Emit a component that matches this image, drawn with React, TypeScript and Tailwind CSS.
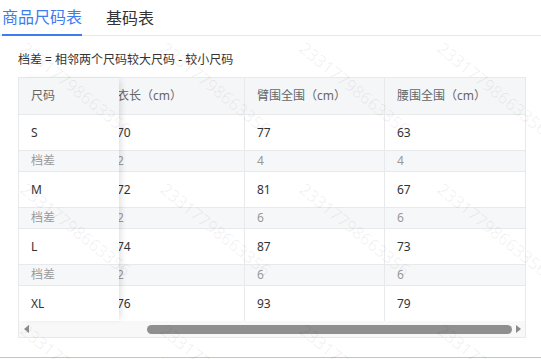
type Row = { label: string; values: string[]; diff?: boolean; h: string };

const rows: Row[] = [
  { label: 'S', values: ['70', '77', '63'], h: 'h-[36px]' },
  { label: '档差', values: ['2', '4', '4'], diff: true, h: 'h-[21px]' },
  { label: 'M', values: ['72', '81', '67'], h: 'h-[36px]' },
  { label: '档差', values: ['2', '6', '6'], diff: true, h: 'h-[21px]' },
  { label: 'L', values: ['74', '87', '73'], h: 'h-[36px]' },
  { label: '档差', values: ['2', '6', '6'], diff: true, h: 'h-[21px]' },
  { label: 'XL', values: ['76', '93', '79'], h: 'h-[35px]' },
];

const headers = ['衣长（cm）', '臂围全围（cm）', '腰围全围（cm）'];
const colCls = ['w-[141px] pl-[13px] border-r', 'w-[140px] pl-[12px] border-r', 'w-[140px] pl-[12px]'];

const marks: [number, number][] = [];
[-97, 45, 186, 327].forEach((y) => {
  [23, 163, 302, 440].forEach((x) => marks.push([x, y]));
});

export default function App() {
  return (
    <div
      className="relative h-[359px] w-[541px] overflow-hidden bg-white text-[#333]"
      style={{ fontFamily: '"Noto Sans", "Noto Sans CJK SC", sans-serif' }}
    >
      {/* tabs */}
      <div className="flex h-[36px] items-stretch gap-[24px] border-b border-[#e8e8e8] pl-[2px]">
        <div className="-mb-px flex items-center border-b-2 border-[#3d7cf0] text-[16px] text-[#3d7cf0]">商品尺码表</div>
        <div className="flex items-center text-[16px] text-[#333]">基码表</div>
      </div>

      <div className="mt-[15px] pl-[18px] text-[12px] leading-[18px] text-[#333]">档差 = 相邻两个尺码较大尺码 - 较小尺码</div>

      {/* table */}
      <div className="mt-[8px] ml-[18px] w-[508px] border border-[#e8e9eb]">
        <div className="flex">
          <div className="relative z-10 w-[100px] shrink-0 bg-white shadow-[4px_0_6px_-2px_rgba(0,0,0,0.12)]">
            <div className="flex h-[37px] items-center border-b border-[#e8e9eb] bg-[#f5f6f8] pl-[12px] text-[12px] text-[#666]">尺码</div>
            {rows.map((r, i) => (
              <div
                key={i}
                className={`flex items-center pl-[12px] text-[12px] ${r.h} ${i < rows.length - 1 ? 'border-b border-[#e8e9eb]' : ''} ${r.diff ? 'bg-[#f6f7f9] text-[#999]' : 'bg-white text-[#333]'}`}
              >
                {r.label}
              </div>
            ))}
          </div>
          <div className="flex-1 overflow-hidden">
            <div className="-ml-[15px] w-[421px]">
              <div className="flex h-[37px] border-b border-[#e8e9eb] bg-[#f5f6f8] text-[12px] text-[#666]">
                {headers.map((h, j) => (
                  <div key={h} className={`flex shrink-0 items-center border-[#e8e9eb] ${colCls[j]}`}>{h}</div>
                ))}
              </div>
              {rows.map((r, i) => (
                <div
                  key={i}
                  className={`flex text-[12px] ${r.h} ${i < rows.length - 1 ? 'border-b border-[#e8e9eb]' : ''} ${r.diff ? 'bg-[#f6f7f9] text-[#999]' : 'bg-white text-[#333]'}`}
                >
                  {r.values.map((v, j) => (
                    <div key={j} className={`flex shrink-0 items-center border-[#e8e9eb] ${colCls[j]}`}>{v}</div>
                  ))}
                </div>
              ))}
            </div>
          </div>
        </div>
        {/* scrollbar */}
        <div className="flex h-[16px] items-center bg-[#f8f8f8] pr-[4px] pl-[5px]">
          <div className="h-0 w-0 border-y-[4px] border-r-[5px] border-y-transparent border-r-[#8a8a8a]" />
          <div className="ml-[118px] h-[9px] w-[365px] rounded-full bg-[#8f8f8f]" />
          <div className="ml-auto h-0 w-0 border-y-[4px] border-l-[5px] border-y-transparent border-l-[#8a8a8a]" />
        </div>
      </div>

      <div className="mt-[19px] pl-[100px] text-[14px] leading-[18px] font-bold text-[#333]">尺码测量方法说明</div>
      <div className="absolute top-[357px] left-0 h-px w-[541px] bg-[#c4c4c4]" />

      {/* watermark */}
      <div className="pointer-events-none absolute inset-0 z-20">
        {marks.map(([x, y], i) => (
          <div
            key={i}
            className="absolute origin-left rotate-[39deg] text-[17px] leading-none whitespace-nowrap text-black/[0.06]"
            style={{ left: x, top: y - 8 }}
          >
            23317798663356
          </div>
        ))}
      </div>
    </div>
  );
}
